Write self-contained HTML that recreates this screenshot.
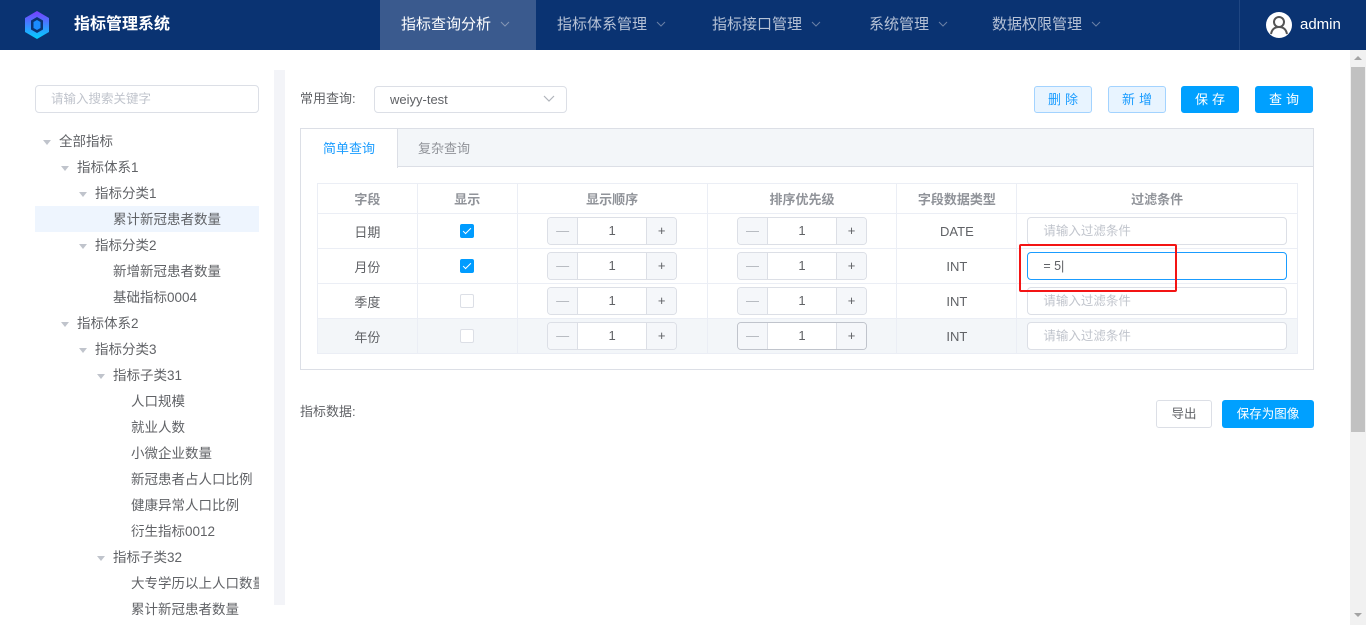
<!DOCTYPE html>
<html><head><meta charset="utf-8"><style>
*{box-sizing:border-box;margin:0;padding:0}
body{width:1366px;height:625px;overflow:hidden;background:#fff;font-family:"Liberation Sans","Noto Sans CJK SC",sans-serif;font-size:13px;color:#606266;position:relative}
.a{position:absolute}
.hdr{left:0;top:0;width:1366px;height:50px;background:#0a3372}
.nav{top:0;height:50px;line-height:50px;color:#b6c2d6;font-size:15px}
.nav svg{margin-left:9px;vertical-align:middle;margin-top:-3px}
.tree{font-size:13.5px;color:#606266;height:26px;line-height:26px}
.tri{display:inline-block;width:0;height:0;border-left:4px solid transparent;border-right:4px solid transparent;border-top:5px solid #c0c4cc;position:absolute}
.btn{top:86px;height:27px;width:58px;line-height:25px;text-align:center;border-radius:3px;font-size:13px;letter-spacing:4px;padding-left:4px}
.lt{background:#e8f4ff;border:1px solid #a3d3ff;color:#1a9cff}
.pr{background:#00a0ff;border:1px solid #00a0ff;color:#fff}
table{border-collapse:collapse;position:absolute;left:317px;top:183px;width:981px}
td{border:1px solid #ebeef5;text-align:center;height:35px;font-size:13px;color:#606266;padding:0;vertical-align:middle}
tr.h td{height:30px;color:#909399;font-weight:bold}
tr.g td{background:#f3f6f9}
.num{display:inline-flex;width:130px;height:28px;border:1px solid #dcdfe6;border-radius:4px;background:#fff;vertical-align:middle;overflow:hidden}
.num span{width:30px;background:#f5f7fa;color:#b0b4bb;line-height:26px;font-size:13px}
.num span:first-child{border-right:1px solid #dcdfe6}
.num span:last-child{border-left:1px solid #dcdfe6;color:#606266}
.num b{flex:1;font-weight:normal;line-height:26px;color:#606266}
.cb{display:block;margin:0 auto;width:14px;height:14px;border:1px solid #dcdfe6;border-radius:2px;background:#fff;position:relative}
.cb.on{background:#009cff;border-color:#009cff}
.cb.on:after{content:"";position:absolute;left:4px;top:1px;width:3px;height:7px;border:solid #fff;border-width:0 1px 1px 0;transform:rotate(45deg)}
.inp{display:block;margin:0 10px;height:28px;border:1px solid #dcdfe6;border-radius:4px;background:#fff;text-align:left;padding-left:15px;line-height:26px;color:#c0c4cc;font-size:12.5px}
</style></head><body>
<div class="a hdr"></div>
<svg class="a" style="left:23px;top:10px" width="28" height="30" viewBox="0 0 28 30"><defs><linearGradient id="g" x1="0" y1="0" x2="0" y2="1"><stop offset="0" stop-color="#7a3cff"/><stop offset="1" stop-color="#00d2ff"/></linearGradient></defs><polygon points="14,1 26,8 26,22 14,29 2,22 2,8" fill="url(#g)"/><polygon points="14,7 20,10.5 20,19.5 14,23 8,19.5 8,10.5" fill="#0a3372"/><polygon points="14,10 17.5,12 17.5,18 14,20 10.5,18 10.5,12" fill="#1a8cff"/></svg>
<div class="a" style="left:74px;top:13px;color:#fff;font-size:16px;font-weight:bold;line-height:24px">指标管理系统</div>
<div class="a nav" style="left:380px;width:156px;background:#3a5a8e;color:#fff;padding-left:21px">指标查询分析<svg width="10" height="6"><path d="M1 1l4 4 4-4" fill="none" stroke="#8496b5" stroke-width="1"/></svg></div>
<div class="a nav" style="left:557px">指标体系管理<svg width="10" height="6"><path d="M1 1l4 4 4-4" fill="none" stroke="#6a80a6" stroke-width="1"/></svg></div>
<div class="a nav" style="left:712px">指标接口管理<svg width="10" height="6"><path d="M1 1l4 4 4-4" fill="none" stroke="#6a80a6" stroke-width="1"/></svg></div>
<div class="a nav" style="left:869px">系统管理<svg width="10" height="6"><path d="M1 1l4 4 4-4" fill="none" stroke="#6a80a6" stroke-width="1"/></svg></div>
<div class="a nav" style="left:992px">数据权限管理<svg width="10" height="6"><path d="M1 1l4 4 4-4" fill="none" stroke="#6a80a6" stroke-width="1"/></svg></div>
<div class="a" style="left:1239px;top:0;width:1px;height:50px;background:#1f4682"></div>
<svg class="a" style="left:1266px;top:12px" width="26" height="26" viewBox="0 0 26 26"><circle cx="13" cy="13" r="13" fill="#fff"/><circle cx="13" cy="10" r="5" fill="none" stroke="#555" stroke-width="2"/><path d="M5 22c1-5 4-7 8-7s7 2 8 7" fill="none" stroke="#555" stroke-width="2"/></svg>
<div class="a" style="left:1300px;top:16px;color:#fff;font-size:15px;line-height:18px">admin</div>
<div class="a" style="left:1350px;top:50px;width:16px;height:575px;background:#f1f1f1"></div>
<div class="a" style="left:1351px;top:67px;width:14px;height:365px;background:#c1c1c1"></div>
<div class="a" style="left:1354px;top:56px;border-left:4px solid transparent;border-right:4px solid transparent;border-bottom:4px solid #a3a3a3"></div>
<div class="a" style="left:1354px;top:613px;border-left:4px solid transparent;border-right:4px solid transparent;border-top:4px solid #a3a3a3"></div>
<div class="a" style="left:35px;top:85px;width:224px;height:28px;border:1px solid #dcdfe6;border-radius:4px;padding-left:15px;line-height:26px;color:#c0c4cc;font-size:12.5px">请输入搜索关键字</div>
<div class="a" style="left:274px;top:70px;width:11px;height:535px;background:#f3f4f8"></div>
<div class="a" style="left:35px;top:206px;width:224px;height:26px;background:#eef5fe"></div>
<div class="a tree" style="left:59px;top:129px">全部指标</div><span class="a tri" style="left:43px;top:140px"></span>
<div class="a tree" style="left:77px;top:155px">指标体系1</div><span class="a tri" style="left:61px;top:166px"></span>
<div class="a tree" style="left:95px;top:181px">指标分类1</div><span class="a tri" style="left:79px;top:192px"></span>
<div class="a tree" style="left:113px;top:207px">累计新冠患者数量</div>
<div class="a tree" style="left:95px;top:233px">指标分类2</div><span class="a tri" style="left:79px;top:244px"></span>
<div class="a tree" style="left:113px;top:259px">新增新冠患者数量</div>
<div class="a tree" style="left:113px;top:285px">基础指标0004</div>
<div class="a tree" style="left:77px;top:311px">指标体系2</div><span class="a tri" style="left:61px;top:322px"></span>
<div class="a tree" style="left:95px;top:337px">指标分类3</div><span class="a tri" style="left:79px;top:348px"></span>
<div class="a tree" style="left:113px;top:363px">指标子类31</div><span class="a tri" style="left:97px;top:374px"></span>
<div class="a tree" style="left:131px;top:389px">人口规模</div>
<div class="a tree" style="left:131px;top:415px">就业人数</div>
<div class="a tree" style="left:131px;top:441px">小微企业数量</div>
<div class="a tree" style="left:131px;top:467px;width:128px;overflow:hidden;white-space:nowrap">新冠患者占人口比例</div>
<div class="a tree" style="left:131px;top:493px">健康异常人口比例</div>
<div class="a tree" style="left:131px;top:519px">衍生指标0012</div>
<div class="a tree" style="left:113px;top:545px">指标子类32</div><span class="a tri" style="left:97px;top:556px"></span>
<div class="a tree" style="left:131px;top:571px;width:128px;overflow:hidden;white-space:nowrap">大专学历以上人口数量</div>
<div class="a tree" style="left:131px;top:597px">累计新冠患者数量</div>
<div class="a" style="left:300px;top:90px;font-size:13px;line-height:18px">常用查询:</div>
<div class="a" style="left:374px;top:86px;width:193px;height:27px;border:1px solid #dcdfe6;border-radius:4px;padding-left:15px;line-height:25px;font-size:13px">weiyy-test</div>
<svg class="a" style="left:543px;top:95px" width="12" height="8"><path d="M1 1l5 5 5-5" fill="none" stroke="#b0b4bb" stroke-width="1.2"/></svg>
<div class="a btn lt" style="left:1034px">删除</div>
<div class="a btn lt" style="left:1108px">新增</div>
<div class="a btn pr" style="left:1181px">保存</div>
<div class="a btn pr" style="left:1255px">查询</div>
<div class="a" style="left:300px;top:128px;width:1014px;height:242px;border:1px solid #dcdfe6"></div>
<div class="a" style="left:301px;top:129px;width:1012px;height:38px;background:#f3f6f9;border-bottom:1px solid #dcdfe6"></div>
<div class="a" style="left:301px;top:129px;width:97px;height:39px;background:#fff;border-right:1px solid #dcdfe6;color:#1a9cff;text-align:center;line-height:40px">简单查询</div>
<div class="a" style="left:418px;top:129px;color:#909399;line-height:40px">复杂查询</div>
<table>
<colgroup><col style="width:100px"><col style="width:100px"><col style="width:190px"><col style="width:190px"><col style="width:120px"><col style="width:281px"></colgroup>
<tr class="h"><td>字段</td><td>显示</td><td>显示顺序</td><td>排序优先级</td><td>字段数据类型</td><td>过滤条件</td></tr>
<tr><td>日期</td><td><span class="cb on"></span></td><td><span class="num"><span>—</span><b>1</b><span>+</span></span></td><td><span class="num"><span>—</span><b>1</b><span>+</span></span></td><td>DATE</td><td><span class="inp">请输入过滤条件</span></td></tr>
<tr><td>月份</td><td><span class="cb on"></span></td><td><span class="num"><span>—</span><b>1</b><span>+</span></span></td><td><span class="num"><span>—</span><b>1</b><span>+</span></span></td><td>INT</td><td><span class="inp" style="border-color:#1a9cff;color:#606266">= 5|</span></td></tr>
<tr><td>季度</td><td><span class="cb"></span></td><td><span class="num"><span>—</span><b>1</b><span>+</span></span></td><td><span class="num"><span>—</span><b>1</b><span>+</span></span></td><td>INT</td><td><span class="inp">请输入过滤条件</span></td></tr>
<tr class="g"><td>年份</td><td><span class="cb"></span></td><td><span class="num"><span>—</span><b>1</b><span>+</span></span></td><td><span class="num" style="border-color:#c0c4cc"><span>—</span><b>1</b><span>+</span></span></td><td>INT</td><td><span class="inp">请输入过滤条件</span></td></tr>
</table>
<div class="a" style="left:1019px;top:244px;width:158px;height:48px;border:2px solid #f31414;border-radius:2px"></div>
<div class="a" style="left:300px;top:401px">指标数据:</div>
<div class="a" style="left:1156px;top:400px;width:56px;height:28px;border:1px solid #dcdfe6;border-radius:3px;text-align:center;line-height:26px;font-size:12.5px">导出</div>
<div class="a" style="left:1222px;top:400px;width:92px;height:28px;background:#00a0ff;border-radius:3px;text-align:center;line-height:28px;color:#fff;font-size:12.5px">保存为图像</div>
</body></html>
